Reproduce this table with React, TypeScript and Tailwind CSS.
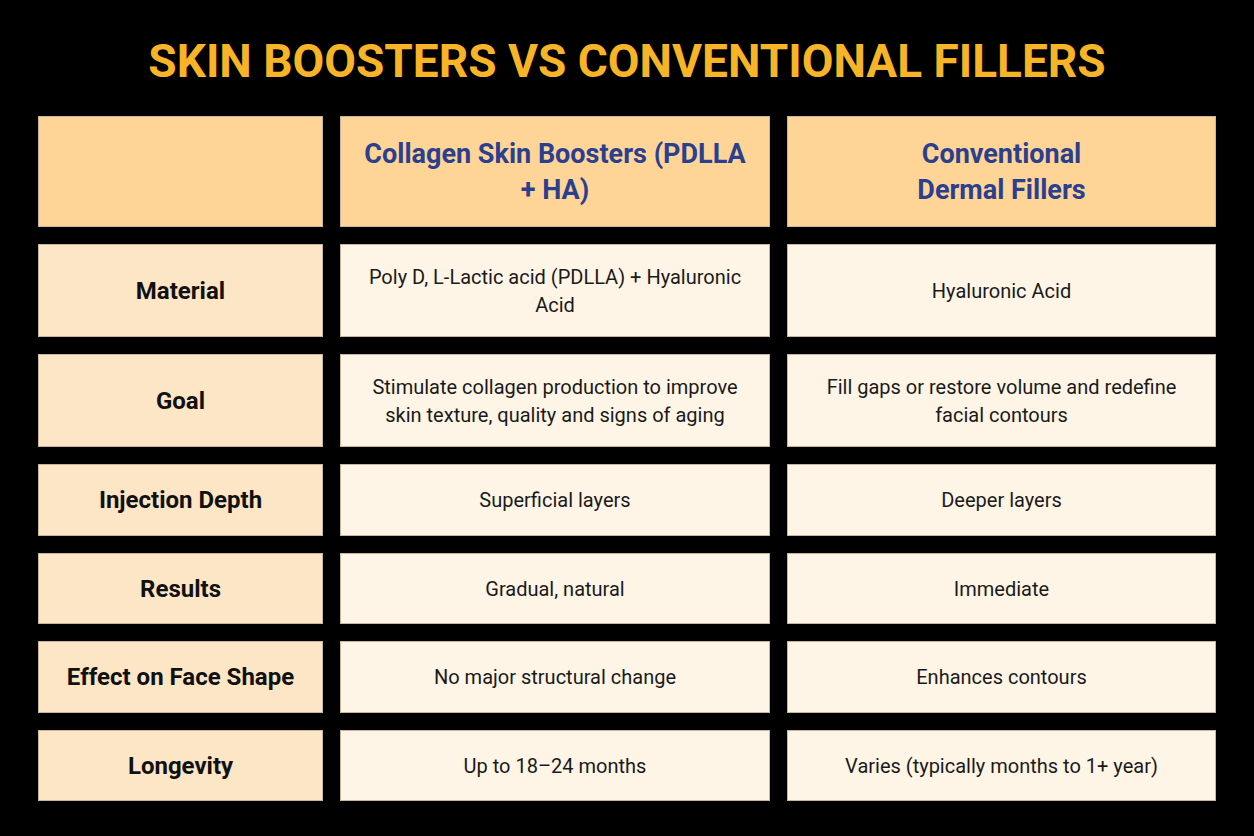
import React from 'react';

type Row = {
  label: string;
  boosters: string;
  fillers: string;
  height: string;
};

const rows: Row[] = [
  {
    label: 'Material',
    boosters: 'Poly D, L-Lactic acid (PDLLA) + Hyaluronic Acid',
    fillers: 'Hyaluronic Acid',
    height: 'h-[93px]',
  },
  {
    label: 'Goal',
    boosters: 'Stimulate collagen production to improve skin texture, quality and signs of aging',
    fillers: 'Fill gaps or restore volume and redefine facial contours',
    height: 'h-[93px]',
  },
  { label: 'Injection Depth', boosters: 'Superficial layers', fillers: 'Deeper layers', height: 'h-[72px]' },
  { label: 'Results', boosters: 'Gradual, natural', fillers: 'Immediate', height: 'h-[71px]' },
  {
    label: 'Effect on Face Shape',
    boosters: 'No major structural change',
    fillers: 'Enhances contours',
    height: 'h-[72px]',
  },
  {
    label: 'Longevity',
    boosters: 'Up to 18–24 months',
    fillers: 'Varies (typically months to 1+ year)',
    height: 'h-[71px]',
  },
];

const cellBase = 'flex items-center justify-center text-center border border-[#c8b69a]';

export default function App() {
  return (
    <div
      className="w-[1254px] h-[836px] bg-black flex flex-col items-center"
      style={{ fontFamily: 'Roboto, "Liberation Sans", sans-serif' }}
    >
      {/* Title */}
      <h1 className="mt-[38px] text-[46px] leading-[46px] font-bold text-[#f6b426]">
        SKIN BOOSTERS VS CONVENTIONAL FILLERS
      </h1>

      {/* Table */}
      <div className="mt-[32px] grid grid-cols-[285px_430px_429px] gap-x-[17px] gap-y-[17px]">
        {/* Header */}
        <div className={`${cellBase} h-[111px] bg-[#fed597]`} />
        <div className={`${cellBase} h-[111px] bg-[#fed597] px-4`}>
          <p className="text-[27px] leading-[36px] font-bold text-[#2b3f8e]">
            Collagen Skin Boosters (PDLLA + HA)
          </p>
        </div>
        <div className={`${cellBase} h-[111px] bg-[#fed597] px-4`}>
          <p className="text-[27px] leading-[36px] font-bold text-[#2b3f8e]">
            Conventional
            <br />
            Dermal Fillers
          </p>
        </div>

        {/* Rows */}
        {rows.map((row) => (
          <React.Fragment key={row.label}>
            <div className={`${cellBase} ${row.height} bg-[#fce6c5]`}>
              <span className="text-[24px] font-bold text-[#111]">{row.label}</span>
            </div>
            <div className={`${cellBase} ${row.height} bg-[#fef5e7] px-6`}>
              <p className="text-[20px] leading-[28px] text-[#1a1a1a]">{row.boosters}</p>
            </div>
            <div className={`${cellBase} ${row.height} bg-[#fef5e7] px-6`}>
              <p className="text-[20px] leading-[28px] text-[#1a1a1a]">{row.fillers}</p>
            </div>
          </React.Fragment>
        ))}
      </div>
    </div>
  );
}
